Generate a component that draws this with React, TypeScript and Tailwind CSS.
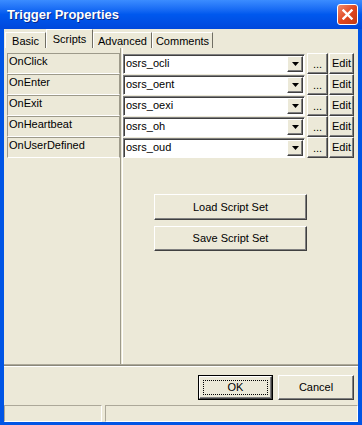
import React from "react";

const font = "font-['Liberation_Sans',Arial,sans-serif]";
const raised =
  "border border-t-white border-l-white border-r-[#404040] border-b-[#404040] shadow-[inset_-1px_-1px_0_#808080] bg-[#ece9d8]";
const sunken =
  "border border-t-[#808080] border-l-[#808080] border-r-white border-b-white shadow-[inset_1px_1px_0_#404040]";

const scripts = [
  { name: "OnClick", value: "osrs_ocli" },
  { name: "OnEnter", value: "osrs_oent" },
  { name: "OnExit", value: "osrs_oexi" },
  { name: "OnHeartbeat", value: "osrs_oh" },
  { name: "OnUserDefined", value: "osrs_oud" },
];

const tabs = [
  { label: "Basic", w: "w-[41px]" },
  { label: "Scripts", w: "w-[47px]", active: true },
  { label: "Advanced", w: "w-[59px]" },
  { label: "Comments", w: "w-[61px]" },
];

const App = () => {
  return (
    <div className={`w-[362px] h-[425px] flex flex-col bg-[#0055e5] ${font} text-[11px] text-black`}>
      {/* title bar */}
      <div className="h-[29px] flex items-center justify-between pl-[7px] pr-[4px] bg-gradient-to-b from-[#3b8cff] via-[#0058ee] to-[#0048dc]">
        <span className="text-white font-bold text-[13px] [text-shadow:1px_1px_0_#0a2a8c] pt-[1px]">
          Trigger Properties
        </span>
        <div className="w-[21px] h-[21px] rounded-[3px] border border-white bg-gradient-to-br from-[#f08a6a] via-[#e0461f] to-[#c23a14] flex items-center justify-center">
          <svg width="11" height="11" viewBox="0 0 11 11">
            <path d="M1.5 1.5 L9.5 9.5 M9.5 1.5 L1.5 9.5" stroke="white" strokeWidth="2.4" strokeLinecap="square" />
          </svg>
        </div>
      </div>

      {/* body */}
      <div className="flex-1 mx-[4px] mb-[3px] bg-[#ece9d8] flex flex-col">
        {/* tabs */}
        <div className="h-[19px] flex items-end pl-[1px]">
          {tabs.map((t) =>
            t.active ? (
              <div
                key={t.label}
                className={`${t.w} h-[19px] border-t border-l border-t-white border-l-white border-r border-r-[#716f64] flex justify-center pt-[3px] leading-[13px]`}
              >
                {t.label}
              </div>
            ) : (
              <div
                key={t.label}
                className={`${t.w} h-[16px] border-t border-l border-t-white border-l-white border-r border-r-[#716f64] flex justify-center pt-[2px] leading-[13px]`}
              >
                {t.label}
              </div>
            )
          )}
        </div>

        {/* panel */}
        <div className="h-[316px] flex">
          <div className="w-[116px] pl-[3px] pt-[5px] flex flex-col">
            {scripts.map((s) => (
              <div
                key={s.name}
                className="h-[21px] border border-t-[#9d9a8a] border-l-[#9d9a8a] border-r-[#9d9a8a] border-b-white pl-[1px] pt-[1px] leading-[13px]"
              >
                {s.name}
              </div>
            ))}
          </div>
          <div className="w-[3px] border-l border-l-[#9d9a8a] border-r border-r-white" />
          <div className="flex-1 pt-[5px] flex flex-col">
            {scripts.map((s) => (
              <div key={s.name} className="h-[21px] flex items-center">
                <div className={`w-[182px] h-[20px] bg-white flex items-center ${sunken}`}>
                  <span className="flex-1 pl-[2px] leading-[13px]">{s.value}</span>
                  <div className={`w-[16px] h-[16px] mr-[1px] flex items-center justify-center ${raised}`}>
                    <svg width="7" height="4" viewBox="0 0 7 4">
                      <path d="M0 0 H7 L3.5 4 Z" fill="black" />
                    </svg>
                  </div>
                </div>
                <div className={`ml-[2px] w-[21px] h-[21px] flex items-end justify-center pb-[3px] leading-[11px] ${raised}`}>
                  ...
                </div>
                <div className={`ml-[1px] w-[25px] h-[21px] flex items-center justify-center leading-[13px] ${raised}`}>
                  Edit
                </div>
              </div>
            ))}

            <div className="ml-[31px] mt-[36px] flex flex-col gap-[6px]">
              <div className={`w-[153px] h-[26px] flex items-center justify-center ${raised}`}>
                Load Script Set
              </div>
              <div className={`w-[153px] h-[25px] flex items-center justify-center ${raised}`}>
                Save Script Set
              </div>
            </div>
          </div>
        </div>

        {/* separator */}
        <div className="h-[3px] border-t border-t-[#aca899] bg-[#8a887a] border-b border-b-white" />

        {/* dialog buttons */}
        <div className="h-[38px] flex justify-end items-start pt-[8px] pr-[4px] gap-[5px]">
          <div className="w-[75px] h-[25px] border border-black p-0">
            <div className={`w-full h-full flex items-center justify-center p-[3px] ${raised}`}>
              <div className="w-full h-full border border-dotted border-black flex items-center justify-center leading-[13px]">
                OK
              </div>
            </div>
          </div>
          <div className={`w-[76px] h-[25px] flex items-center justify-center ${raised}`}>Cancel</div>
        </div>

        {/* status bar */}
        <div className="h-[17px] flex gap-[3px]">
          <div className="w-[98px] h-full border border-t-[#aca899] border-l-[#aca899] border-r-white border-b-white" />
          <div className="flex-1 h-full border border-t-[#aca899] border-l-[#aca899] border-r-white border-b-white" />
        </div>
      </div>
    </div>
  );
};

export default App;
